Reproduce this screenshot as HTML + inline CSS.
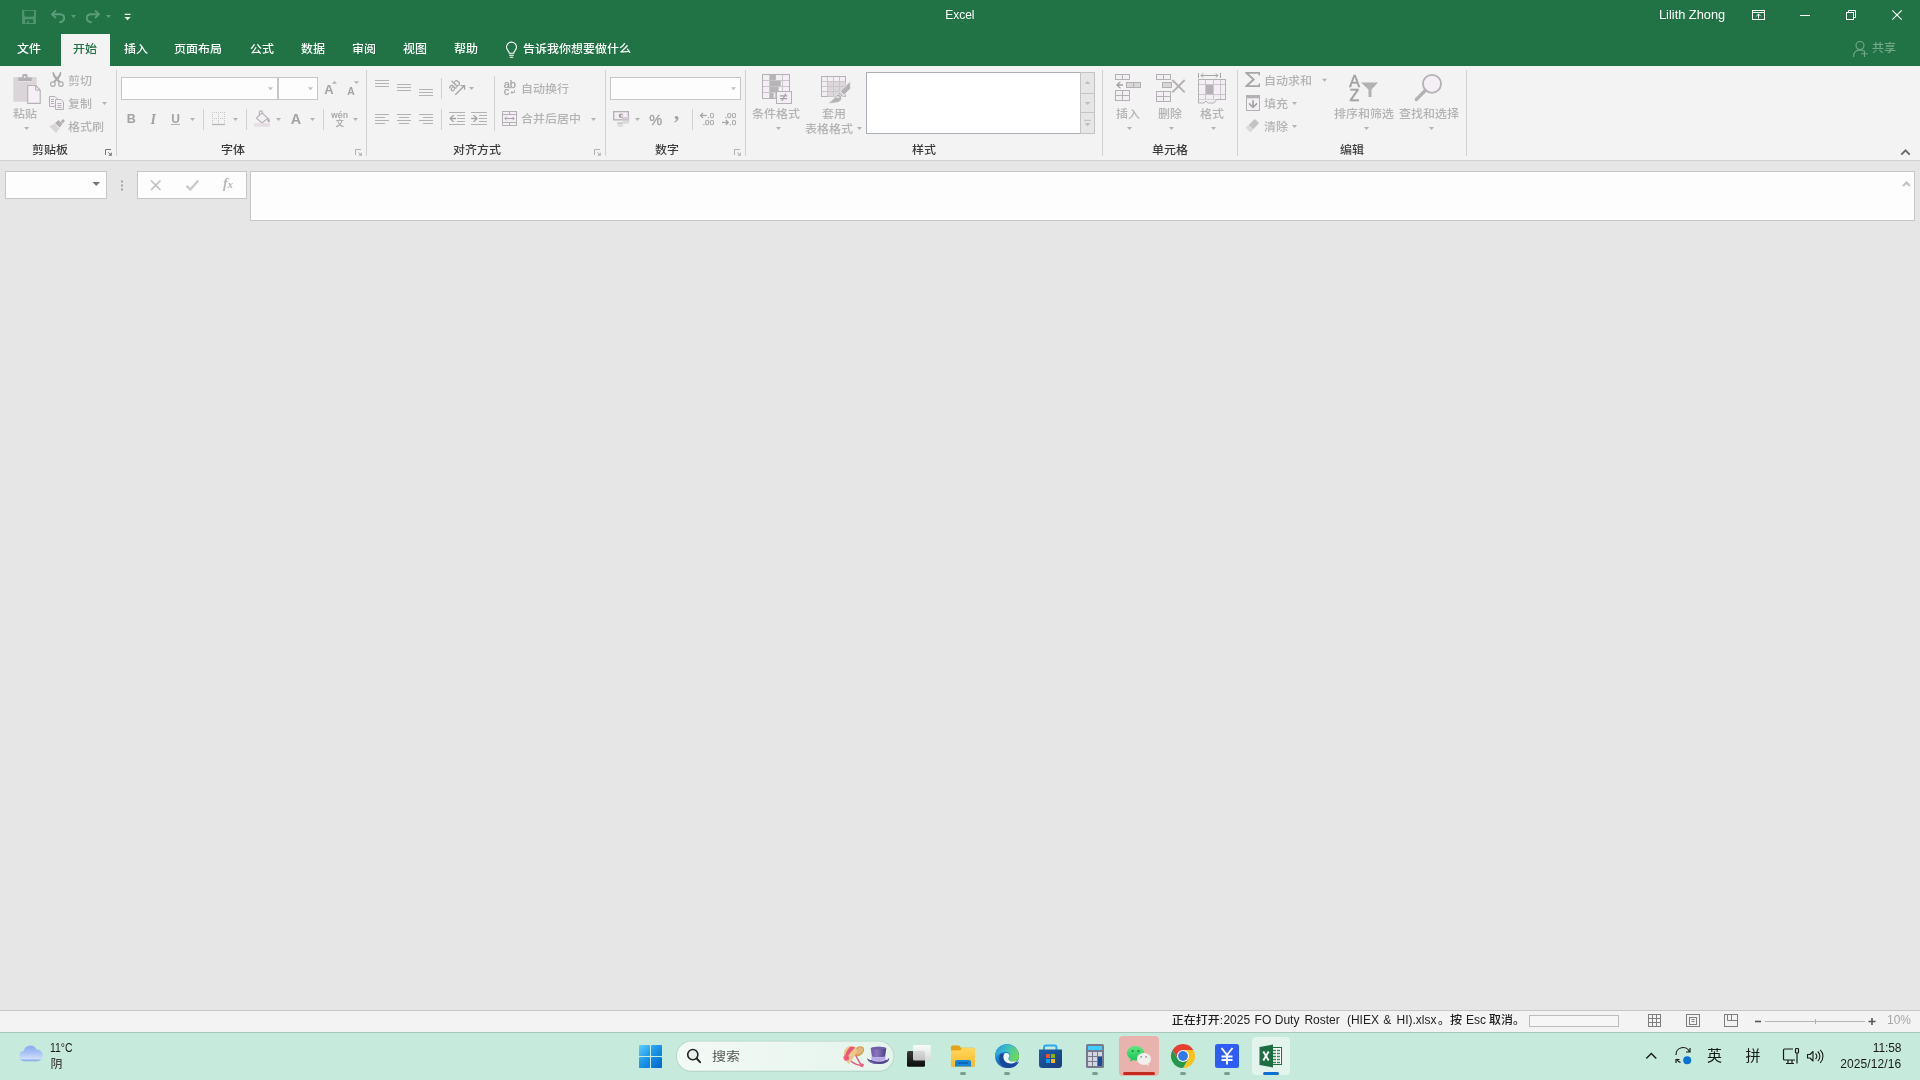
<!DOCTYPE html>
<html lang="zh-CN">
<head>
<meta charset="utf-8">
<title>Excel</title>
<style>
html,body{margin:0;padding:0;}
body{width:1920px;height:1080px;overflow:hidden;position:relative;background:#e6e6e6;font-family:"Liberation Sans","Noto Sans CJK SC",sans-serif;font-size:12px;}
.b{position:absolute;box-sizing:border-box;}
.t{position:absolute;white-space:nowrap;line-height:24px;height:24px;}
.tl{position:absolute;left:0;top:0;width:1920px;height:1080px;will-change:transform;}
svg.ov{position:absolute;left:0;top:0;width:1920px;height:1080px;overflow:visible;}
</style>
</head>
<body>
<div class="b" style="left:0px;top:0px;width:1920px;height:66px;background:#217346;"></div>
<div class="b" style="left:61px;top:34px;width:49px;height:32px;background:#f3f3f3;"></div>
<div class="b" style="left:0px;top:66px;width:1920px;height:94px;background:#f3f3f3;"></div>
<div class="b" style="left:0px;top:160px;width:1920px;height:1px;background:#d0d0d0;"></div>
<div class="b" style="left:116px;top:70px;width:1px;height:86px;background:#d2d2d2;"></div>
<div class="b" style="left:121px;top:77px;width:157px;height:23px;background:#fdfdfd;border:1px solid #c6c6c6;"></div>
<div class="b" style="left:278px;top:77px;width:40px;height:23px;background:#fdfdfd;border:1px solid #c6c6c6;"></div>
<div class="b" style="left:171px;top:124px;width:9px;height:1px;background:#b3b1b3;"></div>
<div class="b" style="left:203px;top:109px;width:1px;height:21px;background:#d2d2d2;"></div>
<div class="b" style="left:246px;top:109px;width:1px;height:21px;background:#d2d2d2;"></div>
<div class="b" style="left:323px;top:109px;width:1px;height:21px;background:#d2d2d2;"></div>
<div class="b" style="left:366px;top:70px;width:1px;height:86px;background:#d2d2d2;"></div>
<div class="b" style="left:441px;top:78px;width:1px;height:21px;background:#d2d2d2;"></div>
<div class="b" style="left:494px;top:76px;width:1px;height:55px;background:#d2d2d2;"></div>
<div class="b" style="left:441px;top:109px;width:1px;height:21px;background:#d2d2d2;"></div>
<div class="b" style="left:605px;top:70px;width:1px;height:86px;background:#d2d2d2;"></div>
<div class="b" style="left:610px;top:77px;width:131px;height:23px;background:#fdfdfd;border:1px solid #c6c6c6;"></div>
<div class="b" style="left:692px;top:109px;width:1px;height:21px;background:#d2d2d2;"></div>
<div class="b" style="left:745px;top:70px;width:1px;height:86px;background:#d2d2d2;"></div>
<div class="b" style="left:866px;top:72px;width:215px;height:62px;background:#fff;border:1px solid #acb2b8;"></div>
<div class="b" style="left:1080px;top:72px;width:15px;height:62px;background:#e6e6e6;border:1px solid #c3c3c3;"></div>
<div class="b" style="left:1081px;top:93px;width:13px;height:1px;background:#c3c3c3;"></div>
<div class="b" style="left:1081px;top:112px;width:13px;height:1px;background:#c3c3c3;"></div>
<div class="b" style="left:1102px;top:70px;width:1px;height:86px;background:#d2d2d2;"></div>
<div class="b" style="left:1237px;top:70px;width:1px;height:86px;background:#d2d2d2;"></div>
<div class="b" style="left:1466px;top:70px;width:1px;height:86px;background:#d2d2d2;"></div>
<div class="b" style="left:5px;top:171px;width:102px;height:28px;background:#fdfdfd;border:1px solid #c6c6c6;"></div>
<div class="b" style="left:137px;top:171px;width:110px;height:28px;background:#fdfdfd;border:1px solid #c6c6c6;"></div>
<div class="b" style="left:250px;top:171px;width:1665px;height:50px;background:#fdfdfd;border:1px solid #c6c6c6;"></div>
<div class="b" style="left:0px;top:1010px;width:1920px;height:1px;background:#c6c6c6;"></div>
<div class="b" style="left:0px;top:1011px;width:1920px;height:21px;background:#f3f3f3;"></div>
<div class="b" style="left:1529px;top:1015px;width:90px;height:12px;background:#f6f6f6;border:1px solid #bcbcbc;"></div>
<div class="b" style="left:0px;top:1032px;width:1920px;height:48px;background:#c6ebdd;"></div>
<div class="b" style="left:0px;top:1032px;width:1920px;height:1px;background:#a9c8bc;"></div>
<svg class="ov" width="1920" height="1080" viewBox="0 0 1920 1080">
<path fill-rule="evenodd" fill="#4f9670" d="M22.100 10h13.800v13.900h-13.800z M24.200 10.800v4.600l1.200 1.300h7.400l1.200-1.300v-4.600z M25.100 19.300h8.100v3.800h-4.100v-1.900h-2.100v1.900h-1.900z"/>
<g fill="none" stroke="#5a9d7a" stroke-width="1.900" stroke-linejoin="miter"><path d="M56 10.300l-3.900 3.900 3.900 3.900"/><path d="M52.500 14.200h7c3.200 0 4.700 2 4.700 3.900 0 2.400-2 4.100-5 4.200" stroke-linecap="butt"/></g>
<path d="M70.900 15h5.200l-2.600 2.900z" fill="#5a9d7a"/>
<g fill="none" stroke="#5a9d7a" stroke-width="1.900" stroke-linejoin="miter"><path d="M95 10.300l3.900 3.900-3.900 3.900"/><path d="M98.500 14.200h-7c-3.200 0-4.700 2-4.700 3.900 0 2.400 2 4.100 5 4.200" stroke-linecap="butt"/></g>
<path d="M105.900 15h5.200l-2.600 2.900z" fill="#5a9d7a"/>
<path d="M124.700 13.800h5.700v1.300h-5.700z M124.500 17h6.100l-3.050 3.200z" fill="#fff"/>
<g fill="none" stroke="#fff" stroke-width="1.1" stroke-linecap="round"><path d="M509.3 53.2c0-2-2.8-3-2.8-6.1a5 5 0 0 1 10 0c0 3.1-2.8 4.1-2.8 6.1z"/><path d="M509.6 55.2h3.8M510.2 57.2h2.6"/></g>
<g fill="none" stroke="#fff" stroke-width="1"><rect x="1752.5" y="10.5" width="12" height="9"/><path d="M1752.5 12.5h12"/><path d="M1758.5 18.5v-4.5M1756.3 16.2l2.2-2.2 2.2 2.2"/></g>
<path d="M1800 15.5h10" stroke="#fff" stroke-width="1" fill="none"/>
<g fill="none" stroke="#fff" stroke-width="1"><rect x="1846.5" y="12.5" width="7" height="7"/><path d="M1848.5 12.5v-2h7v7h-2"/></g>
<path d="M1892.300 10.300l9.400 9.400M1901.700 10.300l-9.400 9.400" stroke="#fff" stroke-width="1.1" fill="none"/>
<g fill="none" stroke="#73a98a" stroke-width="1.1" stroke-linecap="round"><circle cx="1860" cy="45.5" r="4"/><path d="M1853.6 56.5c0-4 2.6-6.6 6.4-6.6 1.4 0 2.6 .4 3.6 1"/><path d="M1864.5 51v5.5M1861.7 53.8h5.6"/></g>
<rect x="13.300" y="77" width="23.400" height="24.800" rx="1.300" fill="#d9d5d9"/>
<path d="M18.100 81v-2.600a1 1 0 0 1 1-1h3.100v-1.900a1.500 1.500 0 0 1 1.500-1.500h2.400a1.500 1.500 0 0 1 1.500 1.500v1.900h3.300a1 1 0 0 1 1 1v2.600z" fill="#b4b1b4"/>
<circle cx="24.900" cy="76.900" r="1" fill="#ece8ec"/>
<path d="M18.100 81.500h13.800" stroke="#e6e2e6" stroke-width=".800"/>
<path d="M27.700 85.500h8l4.500 4.500v13.400h-12.500z" fill="#f6f0f6" stroke="#b3b1b3" stroke-width="1.100"/>
<path d="M35.600 85.700v4.400h4.400" fill="none" stroke="#b3b1b3" stroke-width="1"/>
<path d="M24.1 127h5l-2.5 3z" fill="#b3b1b3"/>
<g fill="none" stroke="#aeabae" stroke-width="1.200"><circle cx="52.900" cy="84.100" r="2.300"/><circle cx="60.900" cy="84.100" r="2.300"/></g>
<path d="M52.5 72.2 L53.8 72 C54.4 74 55.2 75.3 56.4 76.7 L60.5 81.4 L58.9 82.8 L54.2 77.7 C53 76 52.5 74.3 52.5 72.2 Z" fill="#aeabae"/><path d="M61.3 72.2 L60 72 C59.4 74 58.6 75.3 57.4 76.7 L53.3 81.4 L54.9 82.8 L59.6 77.7 C60.8 76 61.3 74.3 61.3 72.2 Z" fill="#aeabae"/>
<g fill="#f4eff4" stroke="#b3b1b3" stroke-width="1"><path d="M49.5 96.5h5.5l2.5 2.5v7.5h-8z"/><path d="M55.5 99.5h5.5l2.5 2.5v7.5h-8z"/></g>
<g fill="none" stroke="#b3b1b3" stroke-width="1"><path d="M51 99.5h3M51 101.5h3M51 103.5h3M57.5 103.5h4M57.5 105.5h4M57.5 107.5h4"/></g>
<path d="M102 102h5l-2.5 3z" fill="#b3b1b3"/>
<g><path d="M60.5 121.5l2.5-2.5 2 2-2.5 2.5z" fill="#b3b1b3"/><path d="M55 123l3.5-3 4 4-3 3.5z" fill="#b3b1b3"/><path d="M49.5 126.5l5-3 5 5-3.5 4.5z" fill="#d9d5d9"/></g>
<path d="M105.5 155v-5.500h5.500" fill="none" stroke="#777" stroke-width="1"/><path d="M111.8 152.2v3.600h-3.600z" fill="#777"/><path d="M108.3 152.3l2.200 2.200" stroke="#777" stroke-width="1" fill="none"/>
<path d="M268 87.2h5l-2.5 3z" fill="#c2c0c2"/>
<path d="M308 87.2h5l-2.5 3z" fill="#c2c0c2"/>
<path d="M332 83.8h5l-2.5-2.8z" fill="#b3b1b3"/>
<path d="M354 81.2h5l-2.5 2.8z" fill="#b3b1b3"/>
<path d="M190 118h5l-2.5 3z" fill="#b3b1b3"/>
<g fill="none" stroke="#c9c7c9" stroke-width="1" stroke-dasharray="1 1"><path d="M212 112.5h13M212 118.5h13M212.5 112v12M218.5 112v12M224.5 112v12"/></g>
<path d="M212 124.5h13" stroke="#b3b1b3" stroke-width="1.2" fill="none"/>
<path d="M233 118h5l-2.5 3z" fill="#b3b1b3"/>
<g fill="#f4eff4" stroke="#b3b1b3" stroke-width="1.1" stroke-linejoin="round"><path d="M256.3 118.2l5.8-5.4 5.6 5.6-5.6 4.6z"/><path d="M259.3 115.5v-3a1.6 1.6 0 0 1 3.2 0v1" fill="none"/></g>
<path d="M268 117.2c1.3 1.6 2 2.8 2 3.7a1.3 1.3 0 0 1-2.6 0c0-.9.3-2 .6-3.7z" fill="#b3b1b3"/>
<rect x="254" y="123.2" width="16" height="3.6" fill="#e6dde6"/>
<path d="M276 118h5l-2.5 3z" fill="#b3b1b3"/>
<path d="M310 118h5l-2.5 3z" fill="#b3b1b3"/>
<path d="M353 118h5l-2.5 3z" fill="#b3b1b3"/>
<path d="M355.5 155v-5.500h5.500" fill="none" stroke="#b3b1b3" stroke-width="1"/><path d="M361.8 152.2v3.600h-3.600z" fill="#b3b1b3"/><path d="M358.3 152.3l2.200 2.200" stroke="#b3b1b3" stroke-width="1" fill="none"/>
<path d="M375 80.5h14M375 83.5h14M375 86.5h14" stroke="#b3b1b3" stroke-width="1" fill="none"/>
<path d="M397 84.5h14M397 87.5h14M397 90.5h14" stroke="#b3b1b3" stroke-width="1" fill="none"/>
<path d="M419 89.5h14M419 92.5h14M419 95.5h14" stroke="#b3b1b3" stroke-width="1" fill="none"/>
<g fill="none" stroke="#a4a2a4" stroke-width="1.300"><path d="M455.300 94.800l8.800-8.800"/><path d="M460.600 85.700h4v4" stroke-width="1.200"/></g>
<path d="M469 87h5l-2.5 3z" fill="#b3b1b3"/>
<g fill="none" stroke="#b3b1b3" stroke-width="1"><path d="M514.5 90v2.5h-3.5"/><path d="M512.5 91l-1.5 1.5 1.5 1.5"/></g>
<path d="M375 114.5h14M375 117.5h10M375 120.5h14M375 123.5h10" stroke="#b3b1b3" stroke-width="1" fill="none"/>
<path d="M397 114.5h14M399 117.5h10M397 120.5h14M399 123.5h10" stroke="#b3b1b3" stroke-width="1" fill="none"/>
<path d="M419 114.5h14M423 117.5h10M419 120.5h14M423 123.5h10" stroke="#b3b1b3" stroke-width="1" fill="none"/>
<path d="M449 112.5h16M457 115.5h8M457 118.5h8M457 121.5h8M449 124.5h16" stroke="#b3b1b3" stroke-width="1" fill="none"/>
<path d="M449.200 118.500l3.600-3.600h1.700l-2.700 2.800h4.200v1.600h-4.200l2.700 2.800h-1.700z" fill="#a4a2a4"/>
<path d="M471 112.5h16M479 115.5h8M479 118.5h8M479 121.5h8M471 124.5h16" stroke="#b3b1b3" stroke-width="1" fill="none"/>
<path d="M478 118.500l-3.600-3.600h-1.700l2.700 2.800h-4.200v1.600h4.200l-2.700 2.800h1.700z" fill="#a4a2a4"/>
<rect x="502.5" y="111.5" width="14" height="14" fill="#f4eff4" stroke="#b3b1b3" stroke-width="1"/>
<g fill="none" stroke="#b3b1b3" stroke-width="1"><path d="M502.5 114.500h14M502.5 122.500h14M509.5 111.5v3M509.5 122.500v3"/><path d="M505 118.5h9" stroke="#a4a2a4"/><path d="M506.500 116.800l-1.700 1.700 1.700 1.700M512.500 116.800l1.700 1.700-1.700 1.700" stroke="#a4a2a4"/></g>
<path d="M591 118h5l-2.5 3z" fill="#b3b1b3"/>
<path d="M594.5 155v-5.500h5.500" fill="none" stroke="#b3b1b3" stroke-width="1"/><path d="M600.8 152.2v3.600h-3.600z" fill="#b3b1b3"/><path d="M597.3 152.3l2.200 2.200" stroke="#b3b1b3" stroke-width="1" fill="none"/>
<path d="M731 87.2h5l-2.5 3z" fill="#c2c0c2"/>
<rect x="613" y="111" width="16" height="9.500" fill="#b3b1b3"/>
<rect x="614.300" y="112.300" width="13.400" height="6.900" fill="#f4eff4"/>
<circle cx="621" cy="115.700" r="2.300" fill="#a4a2a4"/><circle cx="621.900" cy="115.700" r="1" fill="#f4eff4"/>
<g fill="#d3ced3"><rect x="621.500" y="117" width="8" height="2.600" rx="1.300"/><rect x="622.500" y="120.300" width="7" height="1.400" rx=".700"/><rect x="623.500" y="122.300" width="5.500" height="1.200" rx=".600"/><rect x="617" y="122" width="6.500" height="2.600" rx="1.300"/><rect x="617.500" y="125.200" width="5.500" height="1.400" rx=".700"/></g>
<path d="M635 118h5l-2.5 3z" fill="#b3b1b3"/>
<g fill="none" stroke="#a4a2a4" stroke-width="1.2"><path d="M700.5 115.5h6.3"/><path d="M703 113l-2.500 2.500 2.500 2.500"/></g>
<g fill="none" stroke="#a4a2a4" stroke-width="1.2"><path d="M722 122.500h6.300"/><path d="M725.800 120l2.500 2.500-2.500 2.500"/></g>
<path d="M734.5 155v-5.500h5.500" fill="none" stroke="#b3b1b3" stroke-width="1"/><path d="M740.8 152.2v3.600h-3.600z" fill="#b3b1b3"/><path d="M737.3 152.3l2.200 2.200" stroke="#b3b1b3" stroke-width="1" fill="none"/>
<rect x="762.500" y="74.500" width="27" height="24" fill="#f4eff4" stroke="#b3b1b3" stroke-width="1"/>
<g fill="none" stroke="#c9c7c9" stroke-width="1"><path d="M769.500 75v23M775.500 75v23M782.500 75v23M763 80.500h26M763 86.500h26M763 92.500h26"/></g>
<path d="M770 75h5.600v5.200h-5.600zM770 81h10.800v5h-10.800zM770 87h8.500v5h-8.500zM770 93h3.700v5h-3.700z" fill="#b7b4b7"/>
<rect x="776.500" y="91.500" width="15" height="12" fill="#f4eff4" stroke="#b3b1b3" stroke-width="1"/>
<g fill="none" stroke="#a4a2a4" stroke-width="1.200"><path d="M780 95.800h7.300M780 98.600h7.300M785.800 93.600l-3.900 7.400"/></g>
<path d="M776 127h5l-2.5 3z" fill="#b3b1b3"/>
<rect x="821.5" y="76.5" width="24" height="20" fill="#f4eff4" stroke="#b3b1b3" stroke-width="1"/>
<rect x="827.5" y="81.5" width="18" height="15" fill="#dbd7db"/>
<g fill="none" stroke="#c9c7c9" stroke-width="1"><path d="M827.5 77v19M833.5 77v19M839.5 77v19M822 81.500h23M822 86.5h23M822 91.5h23"/></g>
<path d="M850.300 81.300l.200 7.400-6.500 6.300-3.900-3.600z" fill="#b5b2b5" stroke="#f3f3f3" stroke-width=".700"/>
<path d="M839.300 92l3.800 3.400-1.700 1.700-3.800-3.400z" fill="#b5b2b5" stroke="#f3f3f3" stroke-width=".700"/>
<path d="M837.200 94.300c2.800-.300 5 2 4.300 4.700-.800 3-4.500 4.500-13.800 4.400 4-2.200 7-5.500 9.500-9.100z" fill="#b5b2b5" stroke="#f3f3f3" stroke-width=".700"/>
<path d="M836.800 96c1.800-.200 3 .800 3.300 2.200-1.200-.600-2.500-.400-3.700.300z" fill="#e9e5e9"/>
<path d="M857 127h5l-2.5 3z" fill="#b3b1b3"/>
<path d="M1084.700 84h5.600l-2.800-3.100z" fill="#bcbcbc"/>
<path d="M1084.700 102h5.600l-2.800 3.100z" fill="#bcbcbc"/>
<path d="M1084 120.300h7" stroke="#bcbcbc" stroke-width="1"/><path d="M1084.700 123h5.600l-2.800 3.200z" fill="#bcbcbc"/>
<g fill="#f4eff4" stroke="#b3b1b3" stroke-width="1"><rect x="1115.500" y="74.500" width="14" height="5"/><rect x="1115.500" y="90.500" width="14" height="10"/><rect x="1126.500" y="82.500" width="14" height="5" fill="#d9d5d9"/></g>
<g fill="none" stroke="#b3b1b3" stroke-width="1"><path d="M1122.500 74.500v5M1122.500 90.500v10M1115.500 95.500h14M1133.500 82.500v5"/></g>
<path d="M1116 85l3.300-3.300h1.900l-2.500 2.500h4.300v1.600h-4.300l2.500 2.500h-1.900z" fill="#a4a2a4"/>
<path d="M1127 127h5l-2.5 3z" fill="#b3b1b3"/>
<g fill="#f4eff4" stroke="#b3b1b3" stroke-width="1"><rect x="1156.500" y="74.500" width="14" height="5"/><rect x="1156.500" y="91.500" width="14" height="10"/><rect x="1162.500" y="82.500" width="9" height="5" fill="#d9d5d9"/></g>
<g fill="none" stroke="#b3b1b3" stroke-width="1"><path d="M1163.500 74.500v5M1163.500 91.500v10M1156.500 96.500h14"/></g>
<g fill="none" stroke="#b3b1b3" stroke-width="1.900"><path d="M1172.300 80l12.400 12.400M1184.700 80l-12.400 12.400"/></g>
<path d="M1169 127h5l-2.5 3z" fill="#b3b1b3"/>
<g fill="none" stroke="#a4a2a4" stroke-width="1"><path d="M1198.500 73v5M1220.500 73v5M1201 75.500h17"/><path d="M1203.200 73.300l-2.200 2.200 2.200 2.200M1215.800 73.300l2.200 2.200-2.200 2.200"/></g>
<rect x="1198.500" y="79.500" width="27" height="20" fill="#f4eff4" stroke="#b3b1b3" stroke-width="1"/>
<g fill="none" stroke="#c9c7c9" stroke-width="1"><path d="M1205.500 80v19M1213.500 80v19M1220.500 80v19M1199 84.500h26M1199 94.500h26"/></g>
<rect x="1206" y="85" width="7" height="9" fill="#b5b2b5"/>
<path d="M1198.500 99.500v3.500h5.500l2-2 2 2h6l2.500-3.500" fill="#f4eff4" stroke="#b3b1b3" stroke-width="1"/>
<path d="M1211 127h5l-2.5 3z" fill="#b3b1b3"/>
<path d="M1245.200 72h14.800v3.400h-1.500v-1.600h-9.700l6.300 5.700-6.300 5.700h9.700v-1.600h1.500v3.400h-14.800v-1.300l7-6.200-7-6.200z" fill="#a9a6a9"/>
<path d="M1322 78.7h5l-2.5 3z" fill="#b3b1b3"/>
<rect x="1246.500" y="95.500" width="13" height="15" fill="#f4eff4" stroke="#b3b1b3" stroke-width="1"/><rect x="1246" y="95" width="14" height="3.300" fill="#b3b1b3"/>
<path d="M1252.200 100.200h1.700v5.200l2.600-2.600 1.100 1.200-4.550 4.500-4.550-4.500 1.100-1.200 2.600 2.600z" fill="#a4a2a4"/>
<path d="M1292 102h5l-2.5 3z" fill="#b3b1b3"/>
<g transform="rotate(-45 1252.600 125.400)"><rect x="1246.400" y="122.300" width="12.400" height="6.200" rx="1.200" fill="#c6c3c6"/><rect x="1246.400" y="122.300" width="3.200" height="6.200" rx="1.200" fill="#dcd8dc"/><path d="M1249.900 122.300v6.200" stroke="#f3f3f3" stroke-width=".700"/></g>
<path d="M1292 125h5l-2.5 3z" fill="#b3b1b3"/>
<path d="M1361 82.500h17l-6.500 7v7.500h-3v-7.500z" fill="#b3b1b3"/>
<path d="M1364 127h5l-2.5 3z" fill="#b3b1b3"/>
<circle cx="1432" cy="83.800" r="9" fill="#f4eff4" stroke="#b3b1b3" stroke-width="1.800"/><path d="M1425.300 90.500l-9 9" stroke="#b3b1b3" stroke-width="3.200" stroke-linecap="round" fill="none"/>
<path d="M1429 127h5l-2.5 3z" fill="#b3b1b3"/>
<path d="M1901.300 154.600l4.200-4.200 4.200 4.200" fill="none" stroke="#6a6a6a" stroke-width="1.900"/>
<path d="M92.500 182h7.500l-3.750 4z" fill="#777"/>
<path d="M121 180.500h2v2h-2zM121 184.500h2v2h-2zM121 188.500h2v2h-2z" fill="#a4a4a4"/>
<path d="M151 180.500l9.500 9.500M160.500 180.500l-9.500 9.500" stroke="#c2c2c2" stroke-width="1.700" fill="none"/>
<path d="M186.500 185.800l3.800 3.700 8-9" stroke="#cbcbcb" stroke-width="2.500" fill="none"/>
<path d="M1903 186l3.500-3.500 3.500 3.500" fill="none" stroke="#c2c2c2" stroke-width="2"/>
<g fill="none" stroke="#7e7e7e" stroke-width="1"><rect x="1648.500" y="1014.500" width="12" height="12"/><path d="M1652.500 1014.500v12M1656.500 1014.500v12M1648.500 1018.500h12M1648.500 1022.500h12"/></g>
<g fill="none" stroke="#7e7e7e" stroke-width="1"><rect x="1686.500" y="1014.500" width="13" height="12"/><rect x="1689.500" y="1017.500" width="7" height="7"/><path d="M1691.500 1019.500h3M1691.500 1021.500h3"/></g>
<g fill="none" stroke="#7e7e7e" stroke-width="1"><rect x="1724.500" y="1014.500" width="13" height="12"/><path d="M1727.500 1014.500v6h10M1731.500 1014.500v6"/></g>
<path d="M1755 1021.500h6" stroke="#555" stroke-width="1.600" fill="none"/>
<path d="M1765 1021.500h100" stroke="#b4b4b4" stroke-width="1" fill="none"/><path d="M1815.500 1019v5" stroke="#b4b4b4" stroke-width="1" fill="none"/>
<path d="M1868.500 1021.500h7M1872 1018v7" stroke="#555" stroke-width="1.600" fill="none"/>
<defs><linearGradient id="cl" gradientUnits="userSpaceOnUse" x1="0" y1="1045.500" x2="0" y2="1061.400"><stop offset="0" stop-color="#86a9f1"/><stop offset=".45" stop-color="#a9c2f6"/><stop offset=".82" stop-color="#cfdcfa"/><stop offset="1" stop-color="#6f9beb"/></linearGradient><linearGradient id="wn" gradientUnits="userSpaceOnUse" x1="639" y1="1045" x2="662" y2="1068"><stop offset="0" stop-color="#5fd0ff"/><stop offset=".45" stop-color="#1c97ea"/><stop offset="1" stop-color="#0063cc"/></linearGradient><linearGradient id="sb" x1="0" y1="0" x2="1" y2="0"><stop offset="0" stop-color="#f3faf6"/><stop offset="1" stop-color="#e4f4ec"/></linearGradient><linearGradient id="fo" x1="0" y1="0" x2="0" y2="1"><stop offset="0" stop-color="#ffd85e"/><stop offset="1" stop-color="#f8b92a"/></linearGradient><linearGradient id="ed" x1="0" y1="0" x2=".6" y2="1"><stop offset="0" stop-color="#2a9fe4"/><stop offset=".5" stop-color="#1c7fd0"/><stop offset="1" stop-color="#154b9d"/></linearGradient><linearGradient id="ed2" x1="0" y1=".3" x2="1" y2=".6"><stop offset="0" stop-color="#2a9fe0"/><stop offset=".45" stop-color="#3fc0c0"/><stop offset="1" stop-color="#74db4c"/></linearGradient><linearGradient id="st" x1="0" y1="0" x2="1" y2="1"><stop offset="0" stop-color="#1b5fae"/><stop offset="1" stop-color="#1a3a78"/></linearGradient><linearGradient id="tv" x1="0" y1="0" x2="0" y2="1"><stop offset="0" stop-color="#ffffff"/><stop offset="1" stop-color="#d8d8d8"/></linearGradient><linearGradient id="tvb" x1="0" y1="0" x2="0" y2="1"><stop offset="0" stop-color="#3a3a3a"/><stop offset="1" stop-color="#0c0c0c"/></linearGradient><linearGradient id="hat" x1="0" y1="0" x2="1" y2="0"><stop offset="0" stop-color="#6b5aa0"/><stop offset=".4" stop-color="#8a78c0"/><stop offset="1" stop-color="#4a3c7c"/></linearGradient></defs>
<path d="M24.500 1061.300A5.300 5.300 0 0 1 23.700 1050.800A6.800 6.800 0 0 1 36.500 1049.600A5.850 5.850 0 0 1 37.300 1061.300z" fill="url(#cl)"/>
<g fill="url(#wn)"><rect x="639" y="1045" width="11" height="11" rx=".800"/><rect x="651" y="1045" width="11" height="11" rx=".800"/><rect x="639" y="1057" width="11" height="11" rx=".800"/><rect x="651" y="1057" width="11" height="11" rx=".800"/></g>
<rect x="676" y="1040.700" width="218.300" height="31" rx="15.500" fill="#b3d3c6"/><rect x="676.800" y="1041.400" width="216.700" height="29.300" rx="14.650" fill="url(#sb)"/>
<circle cx="692.800" cy="1054.600" r="5.100" fill="#e9efec" stroke="#222" stroke-width="1.600"/><path d="M696.700 1058.500l3.400 3.700" stroke="#222" stroke-width="1.900" stroke-linecap="round"/>
<ellipse cx="858.600" cy="1051.300" rx="6.200" ry="4.300" transform="rotate(-38 858.600 1051.300)" fill="#d39c58"/><ellipse cx="859.300" cy="1050.800" rx="4.300" ry="2.700" transform="rotate(-38 859.300 1050.800)" fill="#e6b877"/><path d="M844 1054.500c-.500-4.500 2.500-8 6.500-8.500 2.500-.300 4.500.300 5.500 1.500 1.500 2 .500 5.500-1.500 8.500-1.500 2.500-3.500 5.500-5.500 8-2.500-1.500-4.500-5-5-9.500z" fill="#efc88b"/><path d="M850 1047c2-.700 4-.300 5.300.800-2.500 2-6.500 6.500-8.500 10.500l-2-1.800c1-4 3-7.500 5.200-9.500z" fill="#e8577a"/><path d="M844.200 1055.500c1.500-.800 3.500-.300 4.500 1 .800 1.200.600 2.800-.500 3.700-1.200 1-3 .800-4-.200-1-1.200-1-3.200 0-4.500z" fill="#f0627f"/><path d="M846 1056.500l1.500 2.500M848 1056.500l-2 3" stroke="#d8466b" stroke-width=".700" fill="none"/><path d="M856.200 1056.500l5 8.700M851.500 1061.500c3 2.500 7 3.800 11 4" stroke="#e4577a" stroke-width="1.400" fill="none" stroke-linecap="round"/><path d="M859.500 1063l4.500 1-1 3.200-3-.700z" fill="#ee5f80"/>
<path d="M870.700 1048.300c2.500-2.200 13-2.200 15.600 0l-1.300 9h-13z" fill="url(#hat)"/><ellipse cx="878.500" cy="1048.200" rx="7.700" ry="1.500" fill="#6f5ea8"/><path d="M867 1058c1.500 1.500 3 2.200 4.800 2 4 2 10 2 13.800 0 1.600 0 3-1 3.500-2.600.600 3.800-3 6.700-11 6.700-7 0-10.600-2.500-11.100-6.100z" fill="#54448c"/><path d="M871.700 1056.300c3.500 1.300 10 1.300 13.600 0l.400 3.400c-3.800 1.700-10.500 1.700-14.400 0z" fill="#bba8ea"/><path d="M867.800 1060c2.200 2.700 6.500 3.900 11 3.700-4.500-.500-8-1.700-11-3.700z" fill="#a895de"/>
<rect x="907" y="1051" width="18" height="15.700" rx="1.500" fill="url(#tvb)"/><rect x="913" y="1045" width="17.800" height="15.600" rx="1.500" fill="url(#tv)" fill-opacity=".880"/>
<path d="M951 1047a1.500 1.500 0 0 1 1.500-1.500h6.500l2 2.200h12.500a1.500 1.500 0 0 1 1.500 1.500v15.800a1.500 1.500 0 0 1-1.500 1.500h-21a1.500 1.500 0 0 1-1.500-1.500z" fill="#e6a412"/><path d="M951 1050.500l9.500-.300 1.500-2.200h11.500a1.500 1.500 0 0 1 1.500 1.500v15.500a1.500 1.500 0 0 1-1.500 1.500h-21a1.500 1.500 0 0 1-1.500-1.500z" fill="url(#fo)"/><path d="M955 1066.400v-4.400a2 2 0 0 1 2-2h12a2 2 0 0 1 2 2v4.400z" fill="#1186da"/><path d="M958 1063h10" stroke="#0a5fae" stroke-width="1.600"/>
<rect x="960" y="1072" width="6" height="3" rx="1.500" fill="#7f9b91"/>
<circle cx="1007" cy="1056" r="12" fill="url(#ed)"/><path d="M995.400 1053.500A12 12 0 0 1 1019 1056c0 3.200-2.200 5.300-5.200 5.700-3 .400-5.300-.800-5.300-2.700 0-1.500 1.500-2 1.500-3.500 0-2-2-3.700-4.800-3.700-3.700 0-7.200 2.300-9.800 6.200z" fill="url(#ed2)"/><path d="M1001.200 1053.300c-2.700 3-2.700 8 .300 11.400 3.500 3.700 9.500 4.200 13.700 1.500 1.800-1.200 3.100-2.900 3.700-4.800-3 2.900-8 3.700-11.400 1.900-3.500-1.800-5-5.800-4-9z" fill="#18479a"/><path d="M1005 1053.200c2.300-.600 4.500.700 4.500 2.400 0 1.400-1.100 2-1.100 3.400 0 1.600 2 2.600 4.600 2.600 2.100 0 4-.700 5.300-2-1.300 2.400-4.300 3.900-7.300 3.900-4.400 0-7.500-2.900-7.500-6 0-1.900.500-3.300 1.500-4.300z" fill="#eef7f6"/>
<rect x="1004" y="1072" width="6" height="3" rx="1.500" fill="#7f9b91"/>
<path d="M1044 1050v-2.500a2 2 0 0 1 2-2h8.500a2 2 0 0 1 2 2v2.500" fill="none" stroke="#2aa8f2" stroke-width="2"/><path d="M1039 1049.500h23v15a3.500 3.500 0 0 1-3.500 3.500h-16a3.500 3.500 0 0 1-3.500-3.500z" fill="url(#st)"/><rect x="1046" y="1054" width="4" height="4" fill="#f25022"/><rect x="1051" y="1054" width="4" height="4" fill="#7fba00"/><rect x="1046" y="1059" width="4" height="4" fill="#00a4ef"/><rect x="1051" y="1059" width="4" height="4" fill="#ffb900"/>
<rect x="1086" y="1044" width="18" height="24" rx="1.500" fill="#757b8c"/><rect x="1088" y="1046" width="14" height="4" fill="#3ecbff"/><g fill="#d3d6de"><rect x="1088" y="1052" width="4" height="4"/><rect x="1093" y="1052" width="4" height="4"/><rect x="1098" y="1052" width="4" height="4"/><rect x="1088" y="1057" width="4" height="4"/><rect x="1093" y="1057" width="4" height="4"/><rect x="1088" y="1062" width="4" height="4"/><rect x="1093" y="1062" width="4" height="4"/></g><rect x="1098" y="1057" width="4" height="9" fill="#174a97"/>
<rect x="1092" y="1072" width="6" height="3" rx="1.500" fill="#7f9b91"/>
<defs><linearGradient id="wc" x1="0" y1="0" x2="0" y2="1"><stop offset="0" stop-color="#5de97f"/><stop offset="1" stop-color="#18c257"/></linearGradient></defs><rect x="1119" y="1036" width="40" height="40" rx="4" fill="#e9b2ac"/><rect x="1123" y="1072" width="32" height="3" rx="1.500" fill="#c42b1c"/><path d="M1135.600 1046c4.800 0 8.600 3.200 8.600 7.200s-3.800 7.200-8.600 7.200c-.900 0-1.800-.100-2.600-.400l-2.800 1.700.600-2.800c-2.300-1.300-3.800-3.400-3.800-5.700 0-4 3.800-7.200 8.600-7.200z" fill="url(#wc)"/><circle cx="1132.700" cy="1051" r="1.050" fill="#168a3a"/><circle cx="1138.500" cy="1051" r="1.050" fill="#168a3a"/><path d="M1144 1053c3.900 0 7 2.600 7 5.900 0 1.900-1.100 3.600-2.800 4.700l.600 2.300-2.500-1.400c-.700.200-1.500.300-2.300.300-3.900 0-7-2.600-7-5.900s3.100-5.900 7-5.900z" fill="#efefef"/><rect x="1140.300" y="1056" width="1.700" height="1.800" rx=".300" fill="#a3a3a3"/><rect x="1145.300" y="1056" width="1.700" height="1.800" rx=".300" fill="#a3a3a3"/>
<path d="M1172.600 1050A12 12 0 0 1 1193.400 1050L1183 1050L1177.800 1059Z" fill="#e63e30"/><path d="M1193.400 1050A12 12 0 0 1 1183 1068L1188.200 1059L1183 1050Z" fill="#fbc219"/><path d="M1183 1068A12 12 0 0 1 1172.600 1050L1177.800 1059L1188.200 1059Z" fill="#25994a"/><circle cx="1183" cy="1056" r="6" fill="#fff"/><circle cx="1183" cy="1056" r="4.900" fill="#3279e8"/>
<rect x="1180" y="1072" width="6" height="3" rx="1.500" fill="#7f9b91"/>
<rect x="1215" y="1044" width="24" height="24" rx="2.500" fill="#2d5cf6"/><path d="M1221.500 1048l5.500 7 5.500-7M1227 1055v9.500M1221.500 1056.500h11M1221.500 1060h11" fill="none" stroke="#fff" stroke-width="2"/>
<rect x="1224" y="1072" width="6" height="3" rx="1.500" fill="#7f9b91"/>
<rect x="1252" y="1037" width="38" height="38" rx="4" fill="#e3f4ed"/><rect x="1263" y="1072" width="16" height="3" rx="1.500" fill="#0a72d2"/><rect x="1269.500" y="1047.500" width="12" height="17" fill="#fff" stroke="#1e6e42" stroke-width="1"/><g stroke="#2f8a57" stroke-width="1.600"><path d="M1273 1050.500h7M1273 1053.500h7M1273 1056.500h7M1273 1059.500h7M1273 1062.500h7"/></g><path d="M1276.500 1048v16" stroke="#fff" stroke-width="1"/><path d="M1259.500 1047l13.500-2.500v23l-13.500-2.500z" fill="#1e6e42"/><path d="M1263.300 1051.500l5.400 9M1268.700 1051.500l-5.400 9" stroke="#fff" stroke-width="1.900" fill="none"/>
<path d="M1646.300 1058.500l5-5 5 5" fill="none" stroke="#1a1a1a" stroke-width="1.400"/>
<g fill="none" stroke="#1a1a1a" stroke-width="1.200"><path d="M1676 1055a7 7 0 0 1 13.500-3"/><path d="M1686 1052h4v-4"/><path d="M1680.500 1062.500a7 7 0 0 1-4-3.500"/><path d="M1676 1063v-3.500h3.500"/></g><circle cx="1687.200" cy="1060.300" r="4" fill="#0a72d2"/>
<g fill="none" stroke="#1a1a1a" stroke-width="1.200"><path d="M1793 1049h-8.500a1 1 0 0 0-1 1v9a1 1 0 0 0 1 1h10.500"/><path d="M1786 1063.500h8M1788 1060v3.500M1792 1060v3.500"/><rect x="1795.500" y="1048.500" width="3" height="4.500" rx=".800"/><path d="M1797 1053v10.500"/></g>
<g fill="none" stroke="#1a1a1a" stroke-width="1.100" stroke-linejoin="round"><path d="M1807.500 1054.500h2.500l3-3v9.500l-3-3h-2.500z"/><path d="M1815.500 1053.500a3.500 3.500 0 0 1 0 5.500M1817.800 1051.500a6.500 6.500 0 0 1 0 9.500M1820.200 1049.800a9 9 0 0 1 0 13"/></g>
</svg>
<div class="tl">
<div class="t" style="top:36.5px;font-size:12px;color:#fff;left:17px;font-weight:500;transform:scaleY(0.92);transform-origin:50% 50%;">文件</div>
<div class="t" style="top:36.5px;font-size:12px;color:#217346;left:73px;font-weight:500;transform:scaleY(0.92);transform-origin:50% 50%;">开始</div>
<div class="t" style="top:36.5px;font-size:12px;color:#fff;left:124px;font-weight:500;transform:scaleY(0.92);transform-origin:50% 50%;">插入</div>
<div class="t" style="top:36.5px;font-size:12px;color:#fff;left:174px;font-weight:500;transform:scaleY(0.92);transform-origin:50% 50%;">页面布局</div>
<div class="t" style="top:36.5px;font-size:12px;color:#fff;left:250px;font-weight:500;transform:scaleY(0.92);transform-origin:50% 50%;">公式</div>
<div class="t" style="top:36.5px;font-size:12px;color:#fff;left:301px;font-weight:500;transform:scaleY(0.92);transform-origin:50% 50%;">数据</div>
<div class="t" style="top:36.5px;font-size:12px;color:#fff;left:352px;font-weight:500;transform:scaleY(0.92);transform-origin:50% 50%;">审阅</div>
<div class="t" style="top:36.5px;font-size:12px;color:#fff;left:403px;font-weight:500;transform:scaleY(0.92);transform-origin:50% 50%;">视图</div>
<div class="t" style="top:36.5px;font-size:12px;color:#fff;left:454px;font-weight:500;transform:scaleY(0.92);transform-origin:50% 50%;">帮助</div>
<div class="t" style="top:37.3px;font-size:12px;color:#fff;left:523px;font-weight:500;transform:scaleY(0.92);transform-origin:50% 50%;">告诉我你想要做什么</div>
<div class="t" style="top:3px;font-size:12px;color:#fff;left:759.8px;width:400px;text-align:center;">Excel</div>
<div class="t" style="top:3px;font-size:12.8px;color:#fff;left:1659px;">Lilith Zhong</div>
<div class="t" style="top:36px;font-size:12px;color:#73a98a;left:1872px;font-weight:500;transform:scaleY(0.92);transform-origin:50% 50%;">共享</div>
<div class="t" style="top:101.5px;font-size:12px;color:#b3b3b3;left:13px;font-weight:500;transform:scaleY(0.92);transform-origin:50% 50%;">粘贴</div>
<div class="t" style="top:68.5px;font-size:12px;color:#b3b3b3;left:68px;font-weight:500;transform:scaleY(0.92);transform-origin:50% 50%;">剪切</div>
<div class="t" style="top:91.5px;font-size:12px;color:#b3b3b3;left:68px;font-weight:500;transform:scaleY(0.92);transform-origin:50% 50%;">复制</div>
<div class="t" style="top:114.5px;font-size:12px;color:#b3b3b3;left:68px;font-weight:500;transform:scaleY(0.92);transform-origin:50% 50%;">格式刷</div>
<div class="t" style="top:137.5px;font-size:12px;color:#3b3b3b;left:32px;font-weight:500;transform:scaleY(0.92);transform-origin:50% 50%;">剪贴板</div>
<div class="t" style="top:77.5px;font-size:13.5px;color:#a4a2a4;left:129px;width:400px;text-align:center;font-weight:bold;transform:scaleX(.96);">A</div>
<div class="t" style="top:78.5px;font-size:10.8px;color:#a4a2a4;left:151px;width:400px;text-align:center;font-weight:bold;transform:scaleX(.96);">A</div>
<div class="t" style="top:106.6px;font-size:12.5px;color:#a4a2a4;left:-68.7px;width:400px;text-align:center;font-weight:bold;">B</div>
<div class="t" style="top:107.6px;font-size:14px;color:#a4a2a4;left:-46.7px;width:400px;text-align:center;font-weight:bold;font-family:'Liberation Serif',serif;font-style:italic;">I</div>
<div class="t" style="top:107px;font-size:12px;color:#a4a2a4;left:-24.5px;width:400px;text-align:center;font-weight:bold;">U</div>
<div class="t" style="top:106.5px;font-size:15.3px;color:#a4a2a4;left:96.3px;width:400px;text-align:center;font-weight:bold;transform:scaleX(.94);">A</div>
<div class="t" style="top:102.5px;font-size:8.8px;color:#a4a2a4;left:139.7px;width:400px;text-align:center;letter-spacing:0.2px;-webkit-text-stroke:.2px #a4a2a4;">wén</div>
<div class="t" style="top:110.5px;font-size:8.5px;color:#a4a2a4;left:139.7px;width:400px;text-align:center;font-weight:500;">文</div>
<div class="t" style="top:137.5px;font-size:12px;color:#3b3b3b;left:221px;font-weight:500;transform:scaleY(0.92);transform-origin:50% 50%;">字体</div>
<div class="t" style="left:443.900px;top:72.900px;width:20px;text-align:center;font-size:11.500px;color:#a4a2a4;-webkit-text-stroke:.250px #a4a2a4;transform:rotate(-45deg);">ab</div>
<div class="t" style="top:72.3px;font-size:11px;color:#a4a2a4;left:309.8px;width:400px;text-align:center;-webkit-text-stroke:.250px #a4a2a4;">ab</div>
<div class="t" style="top:79.2px;font-size:11px;color:#a4a2a4;left:306.6px;width:400px;text-align:center;-webkit-text-stroke:.250px #a4a2a4;">c</div>
<div class="t" style="top:76.5px;font-size:12px;color:#b3b3b3;left:521px;font-weight:500;transform:scaleY(0.92);transform-origin:50% 50%;">自动换行</div>
<div class="t" style="top:107.3px;font-size:12px;color:#b3b3b3;left:521px;font-weight:500;transform:scaleY(0.92);transform-origin:50% 50%;">合并后居中</div>
<div class="t" style="top:137.5px;font-size:12px;color:#3b3b3b;left:453px;font-weight:500;transform:scaleY(0.92);transform-origin:50% 50%;">对齐方式</div>
<div class="t" style="top:107.8px;font-size:14.5px;color:#a4a2a4;left:455.6px;width:400px;text-align:center;-webkit-text-stroke:.35px #a4a2a4;">%</div>
<div class="t" style="top:99.5px;font-size:21px;color:#a4a2a4;left:476.6px;width:400px;text-align:center;font-weight:bold;font-family:'Liberation Serif',serif;">,</div>
<div class="t" style="top:103.7px;font-size:8px;color:#a4a2a4;left:314.4px;width:400px;text-align:right;letter-spacing:0.2px;-webkit-text-stroke:.25px #a4a2a4;">.0</div>
<div class="t" style="top:110.7px;font-size:8px;color:#a4a2a4;left:314.4px;width:400px;text-align:right;letter-spacing:0.2px;-webkit-text-stroke:.25px #a4a2a4;">.00</div>
<div class="t" style="top:103.7px;font-size:8px;color:#a4a2a4;left:336.4px;width:400px;text-align:right;letter-spacing:0.2px;-webkit-text-stroke:.25px #a4a2a4;">.00</div>
<div class="t" style="top:110.7px;font-size:8px;color:#a4a2a4;left:336.4px;width:400px;text-align:right;letter-spacing:0.2px;-webkit-text-stroke:.25px #a4a2a4;">.0</div>
<div class="t" style="top:137.5px;font-size:12px;color:#3b3b3b;left:655px;font-weight:500;transform:scaleY(0.92);transform-origin:50% 50%;">数字</div>
<div class="t" style="top:101.7px;font-size:12px;color:#b3b3b3;left:752px;font-weight:500;transform:scaleY(0.92);transform-origin:50% 50%;">条件格式</div>
<div class="t" style="top:101.7px;font-size:12px;color:#b3b3b3;left:822px;font-weight:500;transform:scaleY(0.92);transform-origin:50% 50%;">套用</div>
<div class="t" style="top:116.7px;font-size:12px;color:#b3b3b3;left:805px;font-weight:500;transform:scaleY(0.92);transform-origin:50% 50%;">表格格式</div>
<div class="t" style="top:137.5px;font-size:12px;color:#3b3b3b;left:912px;font-weight:500;transform:scaleY(0.92);transform-origin:50% 50%;">样式</div>
<div class="t" style="top:101.7px;font-size:12px;color:#b3b3b3;left:1116px;font-weight:500;transform:scaleY(0.92);transform-origin:50% 50%;">插入</div>
<div class="t" style="top:101.7px;font-size:12px;color:#b3b3b3;left:1158px;font-weight:500;transform:scaleY(0.92);transform-origin:50% 50%;">删除</div>
<div class="t" style="top:101.7px;font-size:12px;color:#b3b3b3;left:1200px;font-weight:500;transform:scaleY(0.92);transform-origin:50% 50%;">格式</div>
<div class="t" style="top:137.5px;font-size:12px;color:#3b3b3b;left:1152px;font-weight:500;transform:scaleY(0.92);transform-origin:50% 50%;">单元格</div>
<div class="t" style="top:68.7px;font-size:12px;color:#b3b3b3;left:1264px;font-weight:500;transform:scaleY(0.92);transform-origin:50% 50%;">自动求和</div>
<div class="t" style="top:91.7px;font-size:12px;color:#b3b3b3;left:1264px;font-weight:500;transform:scaleY(0.92);transform-origin:50% 50%;">填充</div>
<div class="t" style="top:114.7px;font-size:12px;color:#b3b3b3;left:1264px;font-weight:500;transform:scaleY(0.92);transform-origin:50% 50%;">清除</div>
<div class="t" style="top:69.5px;font-size:16px;color:#a4a2a4;left:1154.5px;width:400px;text-align:center;-webkit-text-stroke:.55px #a4a2a4;">A</div>
<div class="t" style="top:84.2px;font-size:16px;color:#a4a2a4;left:1154.5px;width:400px;text-align:center;-webkit-text-stroke:.55px #a4a2a4;">Z</div>
<div class="t" style="top:101.7px;font-size:12px;color:#b3b3b3;left:1334px;font-weight:500;transform:scaleY(0.92);transform-origin:50% 50%;">排序和筛选</div>
<div class="t" style="top:101.7px;font-size:12px;color:#b3b3b3;left:1399px;font-weight:500;transform:scaleY(0.92);transform-origin:50% 50%;">查找和选择</div>
<div class="t" style="top:137.5px;font-size:12px;color:#3b3b3b;left:1340px;font-weight:500;transform:scaleY(0.92);transform-origin:50% 50%;">编辑</div>
<div class="t" style="top:172px;font-size:14px;color:#b8b8b8;left:28px;width:400px;text-align:center;font-weight:bold;font-family:'Liberation Serif',serif;font-style:italic;"><i>f</i><span style="font-size:10.5px">x</span></div>
<div class="t" style="top:1008px;font-size:12px;color:#1e1e1e;left:1171.7px;"><span style="display:inline-block;width:51.7px;white-space:pre;font-weight:500;transform:scaleY(.92);">正在打开:</span><span style="display:inline-block;width:31.2px;white-space:pre;">2025 </span><span style="display:inline-block;width:20.2px;white-space:pre;">FO </span><span style="display:inline-block;width:29.7px;white-space:pre;">Duty </span><span style="display:inline-block;width:42.5px;white-space:pre;">Roster </span><span style="display:inline-block;width:36.3px;white-space:pre;">(HIEX </span><span style="display:inline-block;width:13.3px;white-space:pre;">&amp; </span><span style="display:inline-block;width:41.4px;white-space:pre;">HI).xlsx</span><span style="display:inline-block;width:12px;white-space:pre;font-weight:500;transform:scaleY(.92);">。</span><span style="display:inline-block;width:16px;white-space:pre;font-weight:500;transform:scaleY(.92);">按 </span><span style="display:inline-block;width:23.2px;white-space:pre;">Esc </span><span style="display:inline-block;width:36px;white-space:pre;font-weight:500;transform:scaleY(.92);">取消。</span></div>
<div class="t" style="top:1008px;font-size:12px;color:#a6a6a6;left:1887px;">10%</div>
<div class="t" style="top:1036.3px;font-size:12px;color:#1a1a1a;left:50.2px;transform:scaleX(.87);transform-origin:0 50%;">11°C</div>
<div class="t" style="top:1051.8px;font-size:12px;color:#444;left:50.5px;font-weight:500;transform:scaleY(0.92);transform-origin:50% 50%;">阴</div>
<div class="t" style="top:1045.4px;font-size:14px;color:#555;left:712px;font-weight:400;transform:scaleY(0.86);transform-origin:50% 50%;">搜索</div>
<div class="t" style="top:1044px;font-size:15px;color:#1a1a1a;left:1514.5px;width:400px;text-align:center;">英</div>
<div class="t" style="top:1044px;font-size:15px;color:#1a1a1a;left:1553px;width:400px;text-align:center;">拼</div>
<div class="t" style="top:1036.3px;font-size:12px;color:#1a1a1a;left:1501.2px;width:400px;text-align:right;letter-spacing:-.15px;">11:58</div>
<div class="t" style="top:1051.8px;font-size:12px;color:#1a1a1a;left:1501.2px;width:400px;text-align:right;letter-spacing:.1px;">2025/12/16</div>
</div>
</body>
</html>
